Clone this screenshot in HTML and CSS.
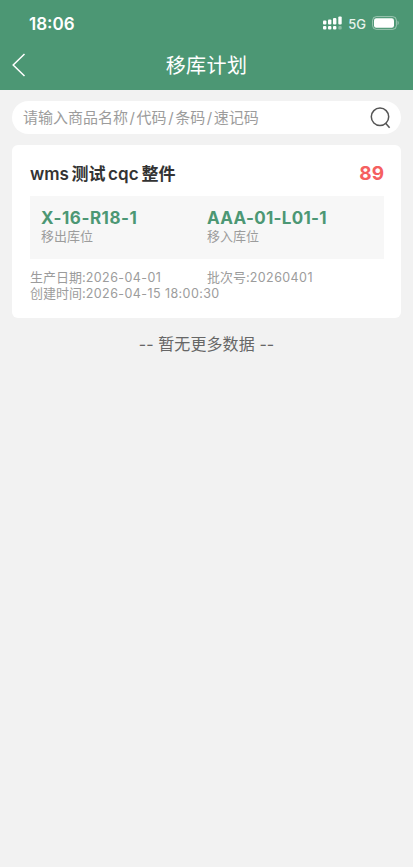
FILE: index.html
```html
<!DOCTYPE html>
<html lang="zh-CN">
<head>
<meta charset="utf-8">
<meta name="viewport" content="width=device-width, initial-scale=1">
<title>移库计划</title>
<link rel="stylesheet" href="styles.css">
</head>
<body>
<header class="header">
  <div class="status">
    <span class="clock">18:06</span>
    <div class="indicators">
      <svg class="signal" width="20" height="14" viewBox="0 0 20 14" fill="#fff">
        <rect x="0" y="4.5" width="3.4" height="4" rx="1"/><rect x="5" y="3.5" width="3.4" height="5" rx="1"/><rect x="10" y="2" width="3.4" height="6.5" rx="1"/><rect x="15.3" y="0.5" width="3.4" height="8" rx="1"/>
        <rect x="0" y="10" width="3.4" height="3.5" rx="1"/><rect x="5" y="10" width="3.4" height="3.5" rx="1"/><rect x="10" y="10" width="3.4" height="3.5" rx="1"/><rect x="15.3" y="10" width="3.4" height="3.5" rx="1" opacity=".35"/>
      </svg>
      <span class="network">5G</span>
      <svg class="battery" width="28" height="14" viewBox="0 0 28 14">
        <rect x=".6" y=".6" width="23.8" height="12.8" rx="3.8" fill="none" stroke="#fff" stroke-opacity=".45"/>
        <rect x="2" y="2.2" width="20" height="9.6" rx="2.2" fill="#fff"/>
        <path d="M25.6 4.8c1.4.6 1.4 3.8 0 4.4z" fill="#fff" opacity=".5"/>
      </svg>
    </div>
  </div>
  <div class="navbar">
    <svg class="back" width="14" height="24" viewBox="0 0 14 24" fill="none" stroke="#fff" stroke-width="1.5"><path d="M12.5 1L1.2 12l11.3 11"/></svg>
    <h1 class="page-title">移库计划</h1>
  </div>
</header>
<main class="content">
  <div class="search">
    <span class="placeholder">请输入商品名称<i>/</i>代码<i>/</i>条码<i>/</i>速记码</span>
    <svg class="search-icon" width="22" height="22" viewBox="0 0 22 22" fill="none" stroke="#555" stroke-width="1.5"><circle cx="10" cy="9.8" r="8.7"/><path d="M15.4 16l4.2 4.8"/></svg>
  </div>
  <section class="card">
    <div class="card-head">
      <h2 class="goods"><span>wms</span><span>测试</span><span class="latin">cqc</span><span>整件</span></h2>
      <span class="quantity">89</span>
    </div>
    <div class="locations">
      <div class="location"><strong class="code code-out">X-16-R18-1</strong><span class="label">移出库位</span></div>
      <div class="location"><strong class="code code-in">AAA-01-L01-1</strong><span class="label">移入库位</span></div>
    </div>
    <div class="meta">
      <span>生产日期:<b>2026-04-01</b></span>
      <span>批次号:<b>20260401</b></span>
      <span class="wide">创建时间:<b>2026-04-15 18:00:30</b></span>
    </div>
  </section>
  <p class="end">-- 暂无更多数据 --</p>
</main>
</body>
</html>
```
FILE: styles.css
```css
* { box-sizing: border-box; margin: 0; padding: 0; }
body {
  min-height: 867px;
  background: #f2f2f2;
  font-family: Inter, "Noto Sans CJK SC", sans-serif;
  color: #333;
}
svg { display: block; flex: none; }
.header { height: 90px; background: #4c9774; color: #fff; }
.status {
  height: 46px;
  padding: 0 13px 0 29px;
  display: flex;
  align-items: center;
  justify-content: space-between;
}
.clock { font-size: 17px; font-weight: 600; line-height: 20px; padding-top: 1px; }
.indicators { display: flex; align-items: center; }
.network { margin: 1px 6px 0 5px; font-size: 13px; line-height: 16px; font-weight: 500; color: #e8f3ed; }
.navbar {
  height: 38px;
  padding: 0 12px;
  display: grid;
  grid-template-columns: 14px 1fr 14px;
  align-items: center;
}
.back { margin-bottom: 2px; }
.page-title { padding-top: 1px; text-align: center; font-size: 20px; font-weight: 400; line-height: 38px; letter-spacing: .4px; }
.content { padding: 11px 12px 0; }
.search {
  height: 33px;
  padding: 0 9px 0 11px;
  border-radius: 17px;
  background: #fff;
  display: flex;
  align-items: center;
  justify-content: space-between;
}
.placeholder { font-size: 15px; line-height: 33px; color: #9c9c9c; }
.placeholder i { display: inline-block; width: 8.6px; text-align: center; font-style: normal; }
.card { height: 173px; margin-top: 11px; padding: 0 17px 0 18px; border-radius: 6px; background: #fff; }
.card-head { height: 51px; padding-top: 7px; display: flex; align-items: center; justify-content: space-between; }
.goods { display: flex; gap: 2.5px; font-size: 17px; line-height: 24px; font-weight: 600; }
.latin { letter-spacing: .2px; }
.quantity { font-size: 19px; line-height: 24px; font-weight: 700; color: #f56060; }
.locations, .meta { display: grid; grid-template-columns: 166px 1fr; }
.locations { height: 63px; padding: 12px 11px 0; background: #f7f7f7; }
.code, .label { display: block; }
.code { font-size: 17px; line-height: 21px; font-weight: 700; color: #4c9774; white-space: nowrap; }
.code-out { letter-spacing: .55px; }
.code-in { letter-spacing: .3px; }
.label { font-size: 13px; line-height: 15px; color: #9c9c9c; }
.meta { padding-top: 11px; grid-template-columns: 177px 1fr; grid-auto-rows: 15.5px; font-size: 13px; line-height: 15.5px; color: #9c9c9c; }
.meta b { font-size: 12.5px; font-weight: 400; letter-spacing: .42px; }
.wide { grid-column: 1 / -1; }
.end { margin-top: 14px; text-align: center; font-size: 16px; line-height: 24px; color: #666; letter-spacing: .1px; }
```
